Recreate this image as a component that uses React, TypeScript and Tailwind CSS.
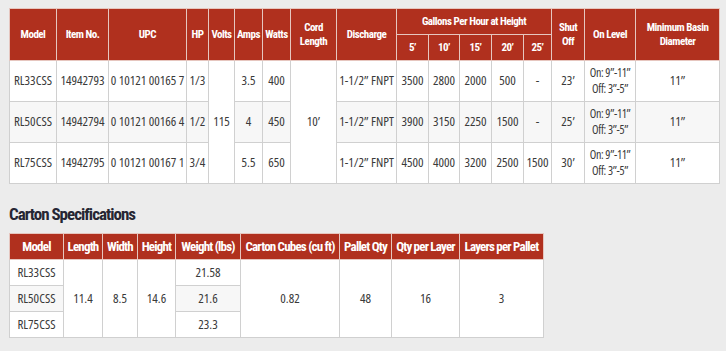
import React from 'react';

const head = "bg-[#b0301e] text-white font-bold text-center align-middle border border-[#e6c6bf] px-0 font-['Roboto'] font-stretch-condensed whitespace-nowrap";
const cell = "border border-[#d0d0d0] text-center align-middle px-0 whitespace-nowrap";

const pumps = [
  { model: 'RL33CSS', item: '14942793', upc: '0 10121 00165 7', hp: '1/3', amps: '3.5', watts: '400', g: ['3500', '2800', '2000', '500', '-'], shut: '23’' },
  { model: 'RL50CSS', item: '14942794', upc: '0 10121 00166 4', hp: '1/2', amps: '4', watts: '450', g: ['3900', '3150', '2250', '1500', '-'], shut: '25’' },
  { model: 'RL75CSS', item: '14942795', upc: '0 10121 00167 1', hp: '3/4', amps: '5.5', watts: '650', g: ['4500', '4000', '3200', '2500', '1500'], shut: '30’' },
];

const weights = ['21.58', '21.6', '23.3'];

export default function App() {
  return (
    <div className="w-[726px] h-[351px] bg-[#ececec] pt-2 pl-[9px] text-[#3a3a3a] text-[13px] font-['Open_Sans'] font-stretch-condensed">
      <table className="table-fixed border-collapse bg-white w-[710px]">
        <colgroup>
          <col className="w-[47px]" />
          <col className="w-[52px]" />
          <col className="w-[78px]" />
          <col className="w-[22px]" />
          <col className="w-[26px]" />
          <col className="w-[28px]" />
          <col className="w-[28px]" />
          <col className="w-[46px]" />
          <col className="w-[60px]" />
          <col className="w-[32px]" />
          <col className="w-[31px]" />
          <col className="w-[32px]" />
          <col className="w-[32px]" />
          <col className="w-[28px]" />
          <col className="w-[33px]" />
          <col className="w-[51px]" />
          <col className="w-[84px]" />
        </colgroup>
        <thead className="text-[11px] leading-[14px] tracking-[-0.5px]">
          <tr className="h-[26px]">
            <th rowSpan={2} className={head}>Model</th>
            <th rowSpan={2} className={head}>Item No.</th>
            <th rowSpan={2} className={head}>UPC</th>
            <th rowSpan={2} className={head}>HP</th>
            <th rowSpan={2} className={head}>Volts</th>
            <th rowSpan={2} className={head}>Amps</th>
            <th rowSpan={2} className={head}>Watts</th>
            <th rowSpan={2} className={head}>Cord<br />Length</th>
            <th rowSpan={2} className={head}>Discharge</th>
            <th colSpan={5} className={head}>Gallons Per Hour at Height</th>
            <th rowSpan={2} className={head}>Shut<br />Off</th>
            <th rowSpan={2} className={head}>On Level</th>
            <th rowSpan={2} className={head}>Minimum Basin<br />Diameter</th>
          </tr>
          <tr className="h-[26px]">
            {['5’', '10’', '15’', '20’', '25’'].map(h => (
              <th key={h} className={head}>{h}</th>
            ))}
          </tr>
        </thead>
        <tbody>
          {pumps.map((p, i) => {
            const bg = i === 1 ? 'bg-[#f7f7f7]' : 'bg-white';
            return (
              <tr key={p.model} className="h-[41px]">
                <td className={`${cell} ${bg}`}>{p.model}</td>
                <td className={`${cell} ${bg}`}>{p.item}</td>
                <td className={`${cell} ${bg}`}>{p.upc}</td>
                <td className={`${cell} ${bg}`}>{p.hp}</td>
                {i === 0 && <td rowSpan={3} className={`${cell} bg-white`}>115</td>}
                <td className={`${cell} ${bg}`}>{p.amps}</td>
                <td className={`${cell} ${bg}`}>{p.watts}</td>
                {i === 0 && <td rowSpan={3} className={`${cell} bg-white`}>10’</td>}
                <td className={`${cell} ${bg}`}>1-1/2” FNPT</td>
                {p.g.map((g, j) => (
                  <td key={j} className={`${cell} ${bg}`}>{g}</td>
                ))}
                <td className={`${cell} ${bg}`}>{p.shut}</td>
                <td className={`${cell} ${bg} text-[12px] leading-[16px] tracking-[-0.3px]`}>
                  <div>On: 9”-11”</div>
                  <div>Off: 3”-5”</div>
                </td>
                <td className={`${cell} ${bg}`}>11”</td>
              </tr>
            );
          })}
        </tbody>
      </table>

      <h2 className="mt-5 mb-[9px] text-[17px] leading-[20px] font-bold text-[#262633] font-['Roboto'] font-stretch-condensed tracking-[-1px]">
        Carton Specifications
      </h2>

      <table className="table-fixed border-collapse bg-white w-[534px]">
        <colgroup>
          <col className="w-[54px]" />
          <col className="w-[39px]" />
          <col className="w-[35px]" />
          <col className="w-[38px]" />
          <col className="w-[65px]" />
          <col className="w-[99px]" />
          <col className="w-[52px]" />
          <col className="w-[68px]" />
          <col className="w-[84px]" />
        </colgroup>
        <thead className="text-[13px] leading-[16px] tracking-[-0.8px]">
          <tr className="h-[26px]">
            {['Model', 'Length', 'Width', 'Height', 'Weight (lbs)', 'Carton Cubes (cu ft)', 'Pallet Qty', 'Qty per Layer', 'Layers per Pallet'].map(h => (
              <th key={h} className={head}>{h}</th>
            ))}
          </tr>
        </thead>
        <tbody>
          {pumps.map((p, i) => {
            const bg = i === 1 ? 'bg-[#f7f7f7]' : 'bg-white';
            return (
              <tr key={p.model} className="h-[26px]">
                <td className={`${cell} ${bg}`}>{p.model}</td>
                {i === 0 && (
                  <>
                    <td rowSpan={3} className={`${cell} bg-white`}>11.4</td>
                    <td rowSpan={3} className={`${cell} bg-white`}>8.5</td>
                    <td rowSpan={3} className={`${cell} bg-white`}>14.6</td>
                  </>
                )}
                <td className={`${cell} ${bg}`}>{weights[i]}</td>
                {i === 0 && (
                  <>
                    <td rowSpan={3} className={`${cell} bg-white`}>0.82</td>
                    <td rowSpan={3} className={`${cell} bg-white`}>48</td>
                    <td rowSpan={3} className={`${cell} bg-white`}>16</td>
                    <td rowSpan={3} className={`${cell} bg-white`}>3</td>
                  </>
                )}
              </tr>
            );
          })}
        </tbody>
      </table>
    </div>
  );
}
